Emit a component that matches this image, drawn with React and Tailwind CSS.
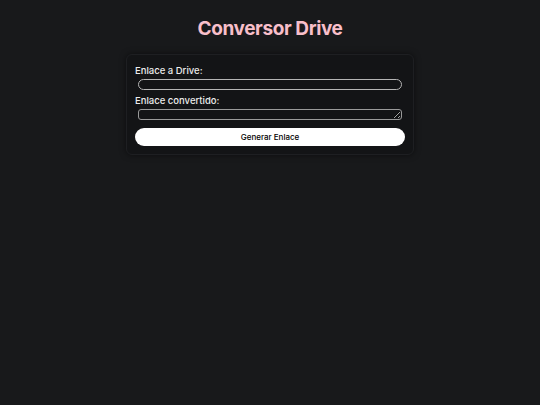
import React, { useState } from "react";

function App() {
  const [link, setLink] = useState("");
  const [converted, setConverted] = useState("");

  // Turn a Drive share link into a direct download link
  const handleGenerate = () => {
    const match = link.match(/\/d\/([^/]+)/);
    if (match) {
      setConverted(`https://drive.google.com/uc?export=download&id=${match[1]}`);
    }
  };

  return (
    <div
      className="min-h-screen w-full bg-[#18191b] flex flex-col items-center pt-[16px]"
      style={{ fontFamily: "Inter, 'Noto Sans', sans-serif" }}
    >
      <h1 className="text-[19px] leading-[26px] font-bold text-[#f8bfca] tracking-[-0.4px]">Conversor Drive</h1>

      <div className="mt-[12px] w-[288px] bg-[#131416] border border-[#1e1f22] rounded-[6px] shadow-[0_0_6px_rgba(0,0,0,0.5)] px-[8px] pt-[10px] pb-[8px] flex flex-col">
        <label className="text-[9.5px] leading-[12px] font-medium text-[#ececec]">Enlace a Drive:</label>
        <input
          type="text"
          value={link}
          onChange={(e) => setLink(e.target.value)}
          className="mt-[2px] ml-[3px] w-[264px] h-[11px] rounded-full border border-[#b5b5b5] bg-[#131416] text-[8px] text-white outline-none"
        />

        <label className="mt-[5px] text-[9.5px] leading-[12px] font-medium text-[#ececec]">Enlace convertido:</label>
        <textarea
          readOnly
          value={converted}
          className="mt-[2px] ml-[3px] w-[264px] h-[11px] rounded-[3px] border border-[#9a9a9a] bg-[#131416] text-[8px] text-white outline-none resize-y overflow-hidden"
        />

        <button
          onClick={handleGenerate}
          className="mt-[8px] w-full h-[18px] rounded-full bg-white text-black text-[8px] font-medium"
        >
          Generar Enlace
        </button>
      </div>
    </div>
  );
}

export default App;
